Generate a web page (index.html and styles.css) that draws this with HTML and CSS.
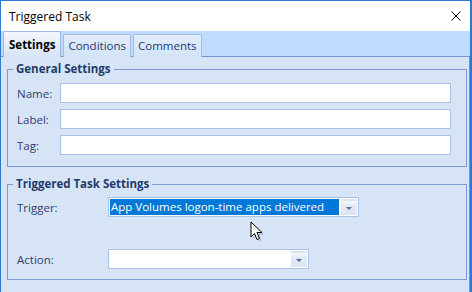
FILE: index.html
```html
<!DOCTYPE html>
<html lang="en">
<head>
  <meta charset="UTF-8">
  <title>Triggered Task</title>
  <link rel="stylesheet" href="styles.css">
</head>
<body>

<div class="window">
  <div class="titlebar">
    <span class="title">Triggered Task</span>
    <svg class="close" width="10" height="10" viewBox="0 0 10 10">
      <path d="M0.5 0.5 L9.5 9.5 M9.5 0.5 L0.5 9.5" stroke="#000" stroke-width="1" fill="none"/>
    </svg>
  </div>

  <div class="tabstrip">
    <div class="tab active">Settings</div>
    <div class="tab">Conditions</div>
    <div class="tab">Comments</div>
  </div>

  <div class="tabpanel">
    <fieldset class="group general">
      <legend>General Settings</legend>
      <div class="row"><label>Name:</label><input type="text" class="field"></div>
      <div class="row"><label>Label:</label><input type="text" class="field"></div>
      <div class="row"><label>Tag:</label><input type="text" class="field"></div>
    </fieldset>

    <fieldset class="group trigger">
      <legend>Triggered Task Settings</legend>
      <div class="row">
        <label class="wide">Trigger:</label>
        <div class="combo trigger-combo">
          <span class="selected">App Volumes logon-time apps delivered</span>
          <span class="drop"><i></i></span>
        </div>
      </div>
      <div class="row">
        <label class="wide">Action:</label>
        <div class="combo action-combo">
          <span class="value"></span>
          <span class="drop"><i></i></span>
        </div>
      </div>
    </fieldset>
  </div>

  <!-- mouse pointer over the dialog -->
  <svg class="pointer" width="16" height="22" viewBox="0 0 16 22">
    <path d="M2 2 L2 17 L5.5 13.5 L8 19.5 L10.5 18.5 L8 12.5 L13 12.5 Z" fill="#8a9199" opacity="0.35" transform="translate(1.5,1.5)"/>
    <path d="M1 1 L1 16 L4.5 12.5 L7 18.5 L9.5 17.5 L7 11.5 L12 11.5 Z" fill="#fff" stroke="#000" stroke-width="1" stroke-linejoin="miter"/>
  </svg>
</div>

</body>
</html>
```

FILE: styles.css
```css
* { margin: 0; padding: 0; box-sizing: border-box; }
body { font-family: "Open Sans", "Liberation Sans", sans-serif; font-size: 11px; background: #fff; }

.window {
  position: relative;
  width: 472px;
  height: 292px;
  border-top: 1px solid #2b79d0;
  border-left: 1px solid #2b79d0;
  border-right: 2px solid #2b79d0;
  background: #d6e4f5;
  overflow: hidden;
}

.titlebar {
  height: 30px;
  background: #fff;
  display: flex;
  align-items: center;
  justify-content: space-between;
  padding: 0 9px 0 8px;
}
.title { font-size: 12px; color: #000; }

.tabstrip {
  height: 26px;
  background: #bfdbff;
  border-bottom: 1px solid #6d96d2;
  display: flex;
  align-items: flex-end;
  padding-left: 2px;
  gap: 2px;
}
.tab {
  height: 23px;
  padding: 0 4px;
  font-size: 11.5px;
  color: #1f3a78;
  background: linear-gradient(#e3edfb, #d3e3f8);
  border: 1px solid #a2bde3;
  border-bottom: none;
  border-radius: 2px 2px 0 0;
  line-height: 21px;
  margin-bottom: -1px;
}
.tab.active {
  height: 26px;
  font-weight: 700;
  color: #000;
  background: linear-gradient(#f4f8fd, #d6e4f5);
  border-color: #9cb8e0;
  line-height: 26px;
  padding: 0 5px;
  position: relative;
  z-index: 1;
}

.tabpanel {
  border-right: 1px solid #6d96d2;
  height: 235px;
  padding: 4px 2px 0 6px;
}

.group {
  border: 1px solid #7c9dd3;
  padding: 0 13px 11px 5px;
}
.group legend {
  padding: 0 3px;
  font-weight: 700;
  font-size: 11.5px;
  line-height: 16px;
  color: #1d3b6c;
}
.group .row {
  display: flex;
  align-items: center;
  padding-left: 4px;
}
.group label {
  width: 43px;
  color: #2e3d74;
  font-size: 11.5px;
}
.group label.wide { width: 91px; }

.general .row { margin-top: 6px; }

.field {
  width: 391px;
  height: 20px;
  border: 1px solid #a9c1e3;
  background: #fff;
  outline: none;
}

.trigger { margin-top: 9px; padding-bottom: 10px; }
.trigger .row:first-of-type { margin-top: 5px; }
.trigger .row + .row { margin-top: 32px; }

.combo {
  height: 20px;
  border: 1px solid #a9c1e3;
  background: #fff;
  display: flex;
  padding: 1px;
}
.trigger-combo { width: 251px; }
.action-combo { width: 201px; }
.combo .selected {
  flex: 1;
  background: #0078d7;
  color: #fff;
  font-size: 11.5px;
  line-height: 16px;
  padding-left: 1px;
  white-space: nowrap;
  overflow: hidden;
}
.combo .value { flex: 1; }
.combo .drop {
  width: 16px;
  margin-left: 2px;
  background:
    radial-gradient(circle, #c9d6e6 0.6px, transparent 0.9px) 0 0 / 2px 2px no-repeat,
    linear-gradient(#ffffff 0, #e4ebf5 6px, #dbe4f1 100%);
  background-size: 2px 2px, 100% 100%;
  background-repeat: repeat-x, no-repeat;
  position: relative;
}
.combo .drop i {
  position: absolute;
  left: 5px;
  top: 8px;
  border-left: 3px solid transparent;
  border-right: 3px solid transparent;
  border-top: 3px solid #4d6f9c;
}

.pointer {
  position: absolute;
  left: 249px;
  top: 220px;
}
```
